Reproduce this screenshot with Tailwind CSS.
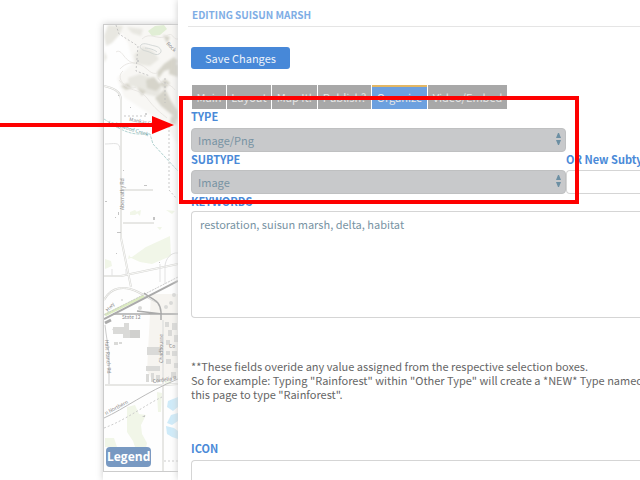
<!DOCTYPE html>
<html lang="en">
<head>
  <meta charset="utf-8">
  <meta name="viewport" content="width=device-width, initial-scale=1">
  <title>Editing Suisun Marsh</title>
  <script src="https://cdn.jsdelivr.net/npm/@tailwindcss/browser@4"></script>
</head>
<body class="relative min-h-screen overflow-hidden bg-white font-['Noto_Sans_CJK_SC',sans-serif] text-[11px] text-[#6f6f6f]">
  <div class="flex h-screen">
    <!-- map -->
    <aside class="ml-[103px] mt-6 flex w-[75px] shrink-0 flex-col shadow-[0_0_7px_#ccc]">
      <div class="relative border-y border-l border-[#ccc]">
        <svg class="block w-full" viewBox="104 25 74 446" fill="none" aria-hidden="true">
          <defs>
            <filter id="soft" x="-30%" y="-30%" width="160%" height="160%"><feGaussianBlur stdDeviation="1"/></filter>
          </defs>
          <path fill="#fefefe" d="M104 25h74v446h-74z"/>
          <path fill="#f8f7f4" d="M116 25h62v120l-14-22-22-14-18-12-7-19 16-15-5-20z" filter="url(#soft)"/>
          <g fill="#e8e7e1" filter="url(#soft)">
            <path d="m108 25 15 1-3 8-8 9-6 3-2-10zM127 27l16 2-2 7-9-3zM104 51l3 6-3 6z"/>
            <path d="m134 55 9-9 10 5 6 8-9 7-14-2zM128 78l12-4 13 4 9 10-4 9-12-3-8-6-9-3z"/>
          </g>
          <g fill="#d6d4ca" filter="url(#soft)">
            <path d="m157 72 7-8 10-7 4 4-5 7-9 3-6 8zM146 80l8-3 7 9-5 5-9-3zM155 98l10-9 6 12 7 10v9l-12-10-5-4zM170 61l8 4v12l-9-3zM163 35l7 2-3 6z"/>
            <path d="m121 86 7-3 4 5-6 2zM137 87l9 4-4 5zM171 116l6 1-1 8-6-2zM159 84l6-5 5 4-5 6z"/>
          </g>
          <path fill="#e1eed5" d="m148 31 4 5 8-1 7-6-3-4-9 1z"/>
          <g stroke="#e4e2de" stroke-width=".8">
            <path d="M116 52c3-2 5 0 8 4s7 7 11 7M123 71c-4 3-4 9 1 13s8 5 12 3M120 69c5-6 13-8 21-4s9 10 17 8M119 80c8 12 21 8 28 18s14 15 20 20M142 39c8-8 16 2 24-3s6 4 12 3M158 78c4 8 12 4 17 12"/>
            <path d="M141 45c3-3 8 0 14 1s8 6 4 8-8-2-13-3-7-4-5-6zM145 48c4 0 10 2 12 4" stroke="#cbd0cf"/>
          </g>
          <g stroke="#bbb" stroke-width=".8" stroke-dasharray="2 2">
            <path d="m116 25 3 9 19 12-2 25 14 5M165 78v25M169 126v64l8 9M124 116h24"/>
          </g>
          <!-- creek -->
          <path d="M104 119c11 7 22 15 35 15h11l3 10 12 13 13 14" stroke="#b4d4d2" stroke-dasharray="3 1"/>
          <!-- farmland -->
          <g fill="#f1f6e8">
            <path d="m132 257 14-10 24-11 1 20-19 8-12-2-11-5zM130 212l5-2 3 3-3 2h-5zM136 212l5-2-1 6zM166 210l9 1-3 3zM157 227h5l-2 3zM105 259l6 2 1 5-7 3zM129 255l2 3-3 1z"/>
            <path d="m127 407 8-2 4 9 7 1-5 10 1 9 5 9-2 10-9-3-3-9-6-9zM157 392l5 1-1 19h-3zM105 438h9l3 9h-12zM164 381l7-2v5l-5 1z"/>
          </g>
          <path fill="#f6f4f0" d="M151 294h27v85l-24 4-7-12z"/>
          <!-- roads -->
          <g stroke="#d6d6d3" stroke-width="2">
            <path d="M104 86c9 2 17 5 17 14v138l10 49M104 300c7-13 20-15 34-8l19 10M104 276h17l57-12M121 190h32M123 223h31M105 385h58l15-1M163 320v151"/>
            <path d="M104 300c7-13 20-15 34-8l19 10M104 276h17l57-12M121 190h32M123 223h31M105 385h58l15-1M163 320v151M104 86c9 2 17 5 17 14v138l10 49" stroke="#f8f8f6" stroke-width="1"/>
            <path d="M105 144c9 0 15-3 15 6M160 264v18M112 276v-7M126 276v-7M165 284v-17c0-8 6-15 13-14" stroke="#e2e2e2" stroke-width="1"/>
          </g>
          <path d="m105 315 39-19" stroke="#dcecc0" stroke-width="3"/>
          <g stroke="#aaa">
            <path d="m104 319 74-38" stroke-width="2"/>
            <path d="m104 315 74-38" stroke="#ccc" stroke-dasharray="2 1"/>
            <path d="M113 314h65M144 293c9 7 16 7 17 19v8M137 311l25 3h16" stroke-width="1.5"/>
            <path d="m105 323 6-3" stroke-width="3"/>
            <path d="M104 418c20-9 42-26 74-39" stroke="#bbb"/>
            <path d="M104 428c22-8 41-23 58-31M164 461h14" stroke="#ccc" stroke-dasharray="2 2"/>
            <path d="m105 325 1 8 3 20v31" stroke="#ccc"/>
          </g>
          <!-- buildings -->
          <g fill="#dadad8">
            <path d="M113 327h11v-4h5v7h11v8h-16v-4h-11zM123 331h8v7h-8zM147 347h14v8h-14zM146 366h14v5h-14zM146 374h3v8h-3zM151 373h3v9h-3zM156 375h4v7h-4zM165 322h4v5h-4zM168 330h4v6h-4zM172 323h5v7h-5zM166 340h4v5h-4zM174 335h4v7h-4zM166 351h4v4h-4zM172 351h5v5h-5zM166 359h5v5h-5zM174 363h4v5h-4zM171 372h5v6h-5z"/>
            <path d="M130 330h10v8h-10z" fill="#d0d0ce"/>
            <path d="m112 329 8-2 1 3-7 2zM114 342h4v3h-4zM119 342h3v2h-3z"/>
            <circle cx="140" cy="308" r="2"/><circle cx="166" cy="307" r="2"/><circle cx="171" cy="303" r="2"/><circle cx="174" cy="295" r="2"/><circle cx="122" cy="300" r="1"/>
          </g>
          <g fill="#c4c4c4">
            <path d="M123 170h1v1h-1zM144 185h3v1h-3zM153 217h2v3h-2zM116 253h1v1h-1zM115 217h1v1h-1zM117 232h4v1h-4zM118 212h1v3h-1zM105 201h2v1h-2zM159 262h1v1h-1zM142 417l3-2v2zM130 107h1v1h-1zM118 95h1v1h-1z"/>
            <circle cx="146" cy="114" r="1"/><circle cx="138" cy="61" r="1"/>
          </g>
          <!-- ponds -->
          <path fill="#cfebf9" d="m173 399 5-2v10l-5 4-6-4 1-6zM171 415l7-2v8l-6 4-5-2zM166 426l8 2 4 3v8l-6-2-5-3z"/>
          <g fill="#888" class="text-[5px]">
            <text transform="rotate(10 129 121)" x="129" y="121">Mankas Cor</text>
            <text transform="rotate(17 108 124)" x="108" y="124" fill="#6b9da0">Ledgewood Creek</text>
            <text transform="rotate(-90 124 210)" x="124" y="210">Abernathy Rd</text>
            <text transform="rotate(45 166 44)" x="166" y="44">Rock</text>
            <text transform="rotate(-48 108 312)" x="108" y="312">Hwy</text>
            <text x="122" y="319">State 12</text>
            <text transform="rotate(86 105 340)" x="105" y="340">Hale Ranch Rd</text>
            <text transform="rotate(-90 163 363)" x="163" y="363">Chadbourne</text>
            <text transform="rotate(-8 153 383)" x="153" y="383">Cordelia R</text>
            <text transform="rotate(-28 106 415)" x="106" y="415">n Northern</text>
            <text x="169" y="348">Co</text>
          </g>
        </svg>
        <button type="button" class="absolute bottom-1 left-0.5 h-5 rounded-sm bg-[#7899c2] px-px font-['Open_Sans',sans-serif] text-xs leading-5 font-bold text-white">Legend</button>
      </div>
    </aside>

    <!-- edit panel -->
    <main class="relative min-w-0 flex-1 bg-white pl-[13px] shadow-[0_0_7px_#ccc]">
      <h1 class="-ml-[3px] h-[27px] border-b border-[#e5e5e5] pt-[7px] pl-1 text-[10px] leading-4 font-bold text-[#7eade5]">EDITING SUISUN MARSH</h1>
      <form>
        <button type="button" class="mt-5 block h-[22px] rounded-[3px] bg-[#4788d8] px-[14px] leading-[22px] text-[#edf3fb]">Save Changes</button>

        <nav class="mt-4 flex h-6 gap-px pl-px leading-6 text-[#e6e6e6]">
          <a href="#main" class="w-[34px] bg-[#a8a8a8] text-center">Main</a>
          <a href="#layout" class="w-11 bg-[#a8a8a8] text-center">Layout</a>
          <a href="#map" class="w-[45px] bg-[#a8a8a8] text-center">Map It!</a>
          <a href="#publish" class="w-[53px] bg-[#a8a8a8] text-center">Publish?</a>
          <a href="#organize" aria-current="page" class="w-[55px] border-t-2 border-[#e3b765] bg-[#6ca0df] text-center leading-5">Organize</a>
          <a href="#video" class="w-[79px] bg-[#a8a8a8] text-center">Video/Embed</a>
        </nav>

        <label for="type" class="block h-[19px] leading-[14px] font-bold text-[#4a8ad8]">TYPE</label>
        <div class="relative w-[375px]">
          <select id="type" class="block h-6 w-full appearance-none rounded border border-[#bfc0c1] bg-[#c8c9cb] px-1.5 leading-5 text-[#7893a3]">
            <option>Image/Png</option>
          </select>
          <svg class="pointer-events-none absolute top-[5px] right-[5px] h-3 w-[5px]" viewBox="0 0 5 12" fill="#6c8fa3"><path d="m0 5 2-5h1l2 5zM0 7h5l-2 5H2z"/></svg>
        </div>

        <div class="flex">
          <div class="w-[375px] shrink-0">
            <label for="subtype" class="block h-[18px] leading-[14px] font-bold text-[#4a8ad8]">SUBTYPE</label>
            <div class="relative">
              <select id="subtype" class="block h-6 w-full appearance-none rounded border border-[#bfc0c1] bg-[#c8c9cb] px-1.5 leading-5 text-[#7893a3]">
                <option>Image</option>
              </select>
              <svg class="pointer-events-none absolute top-[5px] right-[5px] h-3 w-[5px]" viewBox="0 0 5 12" fill="#6c8fa3"><path d="m0 5 2-5h1l2 5zM0 7h5l-2 5H2z"/></svg>
            </div>
          </div>
          <div class="min-w-0 flex-1">
            <label for="new-subtype" class="block h-[18px] overflow-hidden leading-[14px] font-bold whitespace-nowrap text-[#4a8ad8]">OR New Subtype</label>
            <input id="new-subtype" type="text" class="block h-6 w-full rounded-l border border-r-0 border-[#d5d5d5] px-2">
          </div>
        </div>

        <label for="keywords" class="block h-[17px] leading-[14px] font-bold text-[#4a8ad8]">KEYWORDS</label>
        <textarea id="keywords" class="block h-[107px] w-full resize-none rounded-l border border-r-0 border-[#d5d5d5] px-2 py-1 leading-4 text-[#7893a3]">restoration, suisun marsh, delta, habitat</textarea>

        <p class="mt-[41px] leading-[14px] whitespace-nowrap text-[#666]">
          **These fields overide any value assigned from the respective selection boxes.<br>
          So for example: Typing "Rainforest" within "Other Type" will create a *NEW* Type named<br>
          this page to type "Rainforest".
        </p>

        <label for="icon" class="mt-10 block h-[19px] leading-[14px] font-bold text-[#4a8ad8]">ICON</label>
        <input id="icon" type="text" class="block h-6 w-full rounded-l border border-r-0 border-[#d5d5d5] px-2">
      </form>
    </main>
  </div>

  <!-- callout -->
  <div class="pointer-events-none absolute top-24 left-[179px] h-[108px] w-[400px] border-4 border-[#fe0000]"></div>
  <svg class="pointer-events-none absolute top-[116px] left-0 h-[18px] w-[174px]" viewBox="0 0 174 18" fill="#fe0000" aria-hidden="true"><path d="M0 7h152V0l22 9-22 9v-7H0z"/></svg>
</body>
</html>
